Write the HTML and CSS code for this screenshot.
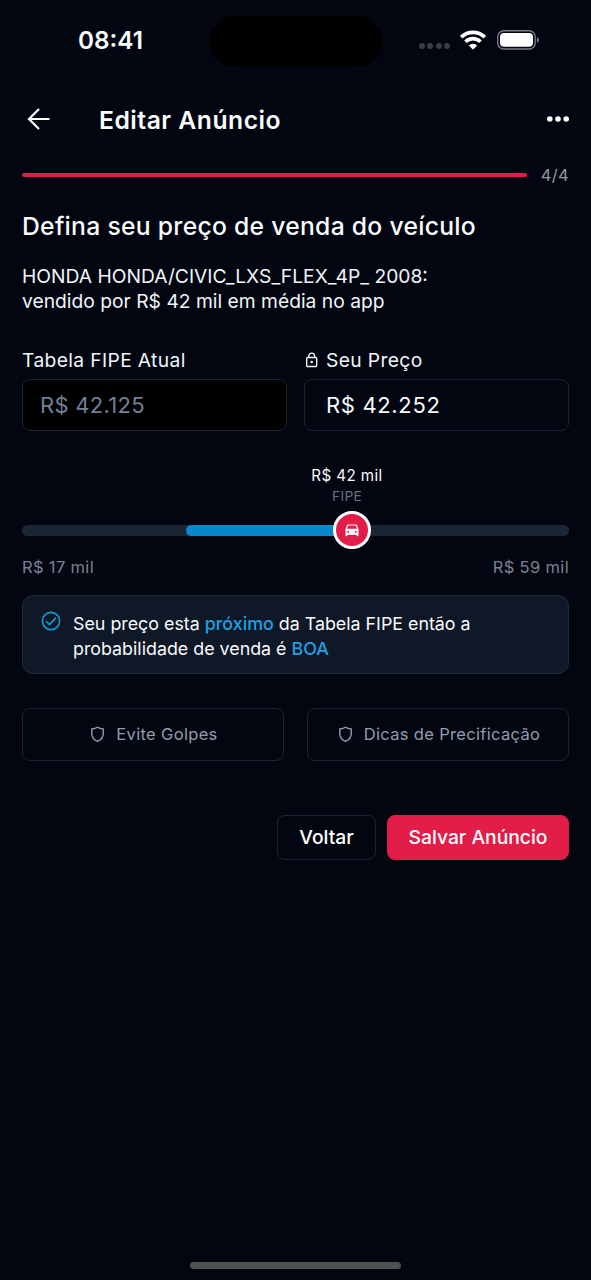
FILE: index.html
```html
<!DOCTYPE html>
<html lang="pt-BR">
<head>
<meta charset="utf-8">
<title>Editar Anúncio</title>
<link rel="stylesheet" href="styles.css">
</head>
<body>
<div class="screen">
  <div class="status">
    <span class="clock">08:41</span>
    <span class="island"></span>
    <div class="indicators">
      <span class="cell"><i></i><i></i><i></i><i></i></span>
      <svg class="wifi" viewBox="0 0 26 20" width="26" height="20"><g fill="none" stroke="#fff" stroke-width="3.7"><path d="M1.2 7.2a16.8 16.8 0 0 1 23.6 0"/><path d="M5.5 11.8a10.6 10.6 0 0 1 15 0"/></g><path d="M8.9 15.4a5.8 5.8 0 0 1 8.2 0L13.7 19q-.7.7-1.4 0Z" fill="#fff"/></svg>
      <svg class="battery" viewBox="0 0 43 20" width="43" height="20"><rect x=".8" y=".8" width="37.4" height="18.2" rx="6" fill="none" stroke="#777a80" stroke-width="1.4"/><rect x="3" y="3" width="33" height="13.8" rx="4" fill="#fff"/><path d="M40 6.9q2 1 2 3t-2 3Z" fill="#777a80"/></svg>
    </div>
  </div>

  <header class="topbar">
    <svg width="24" height="24" viewBox="0 0 24 24" fill="none" stroke="#fff" stroke-width="2.2"><path d="M22.500 12H2M12 2 2 12l10 10"/></svg>
    <h1>Editar Anúncio</h1>
    <svg width="24" height="8" viewBox="0 0 24 8" fill="#fff"><circle cx="3.8" cy="4" r="2.8"/><circle cx="12" cy="4" r="2.8"/><circle cx="20.2" cy="4" r="2.8"/></svg>
  </header>

  <main>
    <div class="progress"><span class="bar"></span><span class="step">4/4</span></div>
    <h2>Defina seu preço de venda do veículo</h2>
    <p class="vehicle">HONDA HONDA/CIVIC_LXS_FLEX_4P_ 2008:<br>vendido por R$ 42 mil em média no app</p>

    <div class="fields">
      <div class="field">
        <label>Tabela FIPE Atual</label>
        <div class="input disabled">R$ 42.125</div>
      </div>
      <div class="field">
        <label><svg width="14" height="16" viewBox="0 0 14 16" fill="none" stroke="#f1f5f9" stroke-width="1.4"><rect x="2.700" y="5.5" width="10" height="9" rx="1"/><path d="M4.800 5.5V4a2.900 2.900 0 0 1 5.800 0v1.5"/><circle cx="7.700" cy="10" r="1.3" fill="#f1f5f9" stroke="none"/></svg>Seu Preço</label>
        <div class="input">R$ 42.252</div>
      </div>
    </div>

    <div class="slider">
      <div class="caption"><span class="price">R$ 42 mil</span><span class="source">FIPE</span></div>
      <div class="track">
        <span class="range"></span>
        <span class="thumb"><svg width="14" height="13" viewBox="0 0 14 13" fill="#fff" fill-rule="evenodd"><path d="M3 .5h8q.8 0 1.1.8L13.5 5.500V11.500q0 .7-.7.7h-.6q-.7 0-.7-.7v-.8H2.500v.8q0 .7-.7.7h-.6q-.7 0-.7-.7V5.500L1.900 1.300Q2.200.5 3 .5ZM3.100 1.600 2.100 4.800h9.800l-1-3.200ZM3.200 6.700a1 1 0 1 0 0 2 1 1 0 0 0 0-2Zm7.600 0a1 1 0 1 0 0 2 1 1 0 0 0 0-2Z"/></svg></span>
      </div>
      <div class="limits"><span>R$ 17 mil</span><span>R$ 59 mil</span></div>
    </div>

    <div class="notice">
      <svg width="20" height="20" viewBox="0 0 20 20" fill="none" stroke="#159bd3" stroke-width="1.6"><circle cx="10" cy="10" r="8.6"/><path d="m5.200 10.200 3.300 3.300 6.300-6.600"/></svg>
      <p>Seu preço esta <b>próximo</b> da Tabela FIPE então a<br>probabilidade de venda é <b>BOA</b></p>
    </div>

    <div class="tips">
      <div class="tip"><svg width="15" height="17" viewBox="0 0 16 18"><path d="M8 1.300C6 2.600 4 3 1.900 3.200V8.500c0 4 2.400 6.200 6.100 7.900 3.700-1.700 6.100-3.900 6.100-7.900V3.200C12 3 10 2.600 8 1.300Z"/></svg><span>Evite Golpes</span></div>
      <div class="tip"><svg width="15" height="17" viewBox="0 0 16 18"><path d="M8 1.300C6 2.600 4 3 1.900 3.200V8.500c0 4 2.400 6.200 6.100 7.900 3.700-1.700 6.100-3.900 6.100-7.900V3.200C12 3 10 2.600 8 1.300Z"/></svg><span>Dicas de Precificação</span></div>
    </div>

    <div class="actions">
      <button class="back">Voltar</button>
      <button class="save">Salvar Anúncio</button>
    </div>
  </main>
  <div class="home"></div>
</div>
</body>
</html>
```

FILE: styles.css
```css
* { box-sizing: border-box; }
body { margin: 0; background: #020610; color: #f8fafc; font-family: Inter, "Liberation Sans", sans-serif; }
h1, h2, p { margin: 0; }
svg { display: block; flex: none; }
.screen { width: 591px; height: 1280px; display: flex; flex-direction: column; overflow: hidden; white-space: nowrap; }

.status { height: 80px; display: grid; grid-template-columns: 210px 172px 1fr; align-items: center; }
.clock { padding: 0 0 1px 78px; font-size: 24.300px; font-weight: 600; line-height: 30px; }
.island { height: 51px; margin-top: 2px; border-radius: 26px; background: #000; }
.indicators { display: flex; align-items: center; padding-left: 37px; }
.cell { display: flex; gap: 2.300px; margin: 12px 10px 0 0; }
.cell i { width: 6px; height: 6px; border-radius: 50%; background: #393c46; }
.battery { margin-left: 11px; }

.topbar { height: 80px; display: flex; align-items: center; padding: 0 21px 2px 27px; }
.topbar h1 { flex: 1; margin-left: 48px; padding-top: 2px; font-size: 24.700px; line-height: 32px; font-weight: 600; letter-spacing: .5px; }

main { padding: 0 22px; }
.progress { display: flex; align-items: center; height: 30px; gap: 14px; }
.bar { flex: 1; height: 4px; border-radius: 2px; background: #dc1f4b; }
.step { font-size: 16.5px; letter-spacing: .3px; color: #94979f; }
h2 { margin-top: 20px; font-size: 24.700px; line-height: 33px; font-weight: 500; letter-spacing: .28px; }
.vehicle { margin-top: 21px; font-size: 19.250px; line-height: 25px; color: #f1f5f9; }

.fields { display: grid; grid-template-columns: 265px 265px; gap: 17px; margin-top: 32px; }
.field label { display: flex; align-items: center; gap: 8px; height: 28px; font-size: 19.250px; letter-spacing: .36px; color: #f1f5f9; }
.input { height: 52px; margin-top: 5px; padding: 0 21px; border: 1.500px solid #1d2331; border-radius: 8px; font-size: 22px; line-height: 50px; letter-spacing: .65px; }
.disabled { padding-left: 17px; background: #000; color: #718096; letter-spacing: .3px; }

.slider { margin-top: 34px; }
.caption { width: 90px; margin-left: 280px; display: flex; flex-direction: column; align-items: center; }
.price { font-size: 15.200px; line-height: 21px; letter-spacing: .4px; }
.source { font-size: 13.750px; line-height: 21px; letter-spacing: .3px; color: #667080; }
.track { position: relative; height: 11px; margin-top: 18px; border-radius: 6px; background: #1b2635; }
.range { position: absolute; left: 164px; top: 0; width: 166px; height: 11px; border-radius: 6px; background: #0787cc; }
.thumb { position: absolute; left: 311px; top: -14px; width: 38px; height: 38px; display: grid; place-items: center; border: 3px solid #fff; border-radius: 50%; background: #e11d48; }
.limits { display: flex; justify-content: space-between; margin-top: 20px; font-size: 16.500px; line-height: 22px; letter-spacing: .34px; color: #7b8290; }

.notice { display: flex; align-items: flex-start; gap: 12px; height: 79px; margin-top: 17px; padding: 15px 18px; border: 1px solid #202b3a; border-radius: 11px; background: #0f1827; font-size: 17.840px; line-height: 25px; }
.notice b { font-weight: 500; color: #1da1e3; }

.tips { display: grid; grid-template-columns: 262px 262px; gap: 23px; margin-top: 34px; }
.tip { height: 53px; display: flex; align-items: center; justify-content: center; gap: 11px; padding: 0 0 1px 2px; border: 1.500px solid #1d2331; border-radius: 8px; font-size: 16.500px; letter-spacing: .33px; color: #949cab; }
.tip path { fill: none; stroke: #949cab; stroke-width: 1.500; stroke-linejoin: round; }

.actions { display: flex; justify-content: flex-end; gap: 11px; margin-top: 54px; }
.actions button { height: 45px; padding: 0 0 1px; border: 1.500px solid #1d2331; border-radius: 8px; background: transparent; color: #fff; font: 500 19.250px Inter, "Liberation Sans", sans-serif; }
.actions .back { width: 99px; }
.actions .save { width: 182px; border-color: #e11d48; background: #e11d48; }
.home { width: 211px; height: 7px; margin: auto auto 11px 190px; border-radius: 4px; background: #505152; }
```
